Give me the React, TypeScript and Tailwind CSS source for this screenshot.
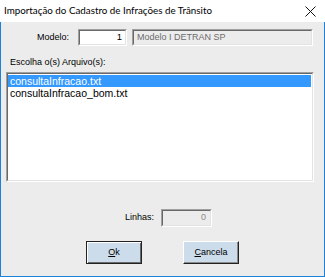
import React from "react";

const files = ["consultaInfracao.txt", "consultaInfracao_bom.txt"];

function Sunken({ className, children }: { className: string; children?: React.ReactNode }) {
  return (
    <div
      className={`border-t-[#a0a0a0] border-l-[#a0a0a0] border-b-white border-r-white border ${className}`}
    >
      <div className="h-full w-full border border-t-[#696969] border-l-[#696969] border-b-[#e3e3e3] border-r-[#e3e3e3]">
        {children}
      </div>
    </div>
  );
}

export default function App() {
  return (
    <div className="w-[325px] h-[277px] flex flex-col bg-white overflow-hidden font-['Liberation_Sans',Arial,sans-serif]">
      {/* title bar */}
      <div className="h-[22px] flex items-center justify-between pl-[4px] pr-[9px] bg-white">
        <span className="font-['Lato',sans-serif] text-[9.8px] text-black leading-none">
          Importação do Cadastro de Infrações de Trânsito
        </span>
        <svg width="11" height="11" viewBox="0 0 11 11" className="mt-[1px]">
          <path d="M0.5 0.5 L10.5 10.5 M10.5 0.5 L0.5 10.5" stroke="#111" strokeWidth="1" />
        </svg>
      </div>

      {/* client area */}
      <div className="flex-1 flex flex-col bg-[#ececec] border-x border-b border-[#1b82d8] text-[9px] text-black">
        <div className="flex items-center mt-[7px] h-[17px]">
          <span className="w-[68px] text-right">Modelo:</span>
          <Sunken className="ml-[9px] w-[49px] h-[17px] bg-white">
            <div className="h-full flex items-center justify-end pr-[3px] text-[9.5px]">1</div>
          </Sunken>
          <Sunken className="ml-[5px] w-[181px] h-[17px] bg-[#ececec]">
            <div className="h-full flex items-center pl-[3px] text-[#6d6d6d]">Modelo I DETRAN SP</div>
          </Sunken>
        </div>

        <div className="mt-[11px] ml-[9px] leading-[11px]">Escolha o(s) Arquivo(s):</div>

        <Sunken className="mt-[4px] ml-[5px] w-[308px] h-[110px] bg-white">
          <div className="flex flex-col pt-[1px] text-[10.5px] leading-[12px]">
            {files.map((f, i) => (
              <div
                key={f}
                className={`pl-[2px] mr-[1px] ${i === 0 ? "bg-[#3399ff] text-white" : "text-black"}`}
              >
                {f}
              </div>
            ))}
          </div>
        </Sunken>

        <div className="flex items-center mt-[27px] h-[18px]">
          <span className="w-[153px] text-right">Linhas:</span>
          <Sunken className="ml-[7px] w-[51px] h-[18px] bg-[#ececec]">
            <div className="h-full flex items-center justify-end pr-[4px] text-[#8a8a8a]">0</div>
          </Sunken>
        </div>

        <div className="flex mt-[14px]">
          <button className="ml-[85px] w-[56px] h-[23px] border border-[#222] bg-[#cddceb] shadow-[inset_1px_1px_0_#fff,inset_-1px_-1px_0_#696969] text-[9px]">
            <span className="underline">O</span>k
          </button>
          <button className="ml-[41px] w-[56px] h-[23px] border border-t-white border-l-white border-b-[#222] border-r-[#222] bg-[#cddceb] shadow-[inset_-1px_-1px_0_#8a8a8a] text-[9px]">
            <span className="underline">C</span>ancela
          </button>
        </div>
      </div>
    </div>
  );
}
